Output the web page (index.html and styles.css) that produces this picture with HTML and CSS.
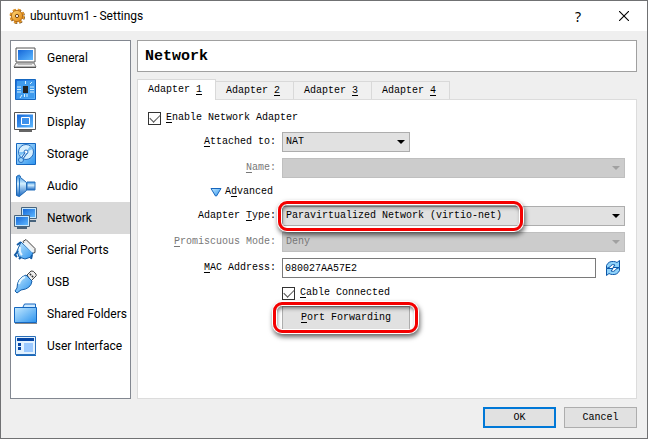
FILE: index.html
```html
<!DOCTYPE html>
<html lang="en">
<head>
<meta charset="utf-8">
<title>ubuntuvm1 - Settings</title>
<link rel="stylesheet" href="styles.css">
</head>
<body>
<svg class="defs" aria-hidden="true">
  <defs>
    <linearGradient id="blue" x1="0" y1="0" x2="1" y2="1"><stop offset="0" stop-color="#1567d8"/><stop offset="1" stop-color="#5db8ff"/></linearGradient>
    <linearGradient id="light" x1="0" y1="0" x2="1" y2="1"><stop offset="0" stop-color="#c4e9ff"/><stop offset="1" stop-color="#2b93ee"/></linearGradient>
    <linearGradient id="cone" x1="0" y1="0" x2="0" y2="1"><stop offset="0" stop-color="#2a86dc"/><stop offset=".4" stop-color="#d4f0ff"/><stop offset="1" stop-color="#1463c0"/></linearGradient>
    <linearGradient id="gold" x1="0" y1="0" x2="1" y2="1"><stop offset="0" stop-color="#ffd878"/><stop offset="1" stop-color="#e0830c"/></linearGradient>
  </defs>
</svg>
<div class="window">
  <header class="titlebar">
    <svg class="app-icon" viewBox="0 0 16 16" aria-hidden="true">
      <circle cx="8.500" cy="8.500" r="6" fill="none" stroke="#6a4a24" stroke-width="3" stroke-dasharray="2.700 2.012"/>
      <circle cx="8" cy="8" r="6" fill="none" stroke="#e69a2c" stroke-width="3" stroke-dasharray="2.700 2.012"/>
      <circle cx="8" cy="8" r="5.600" fill="url(#gold)" stroke="#a86010" stroke-width=".8"/>
      <circle cx="8" cy="8" r="1.600" fill="#fff" stroke="#70410c"/>
    </svg>
    <h1 class="title">ubuntuvm1 - Settings</h1>
    <button class="caption help" aria-label="Help">?</button>
    <button class="caption" aria-label="Close"><svg viewBox="0 0 10 10" width="10" height="10"><path d="M0 0L10 10M10 0L0 10" stroke="#000" stroke-width="1.100"/></svg></button>
  </header>
  <div class="body">
    <nav class="sidebar">
      <a href="#general"><svg viewBox="0 0 24 24"><path d="M3 2h19v14H3z" fill="#fff" stroke="#555"/><path d="M5 4h15v10H5z" fill="url(#blue)"/><path d="M3 17h18l2 4H1z" fill="#eee" stroke="#777"/><path d="M1 21.500h22" stroke="#555"/><path d="M5 18.500h14" stroke="#bbb"/></svg>General</a>
      <a href="#system"><svg viewBox="0 0 24 24"><path d="M2.500 1.500h20v20h-20z" fill="url(#blue)" stroke="#1567c0"/><path d="M4 3h17v17H4z" fill="#3f9bed"/><path d="M10 8h5v7h-5z" fill="#222"/><path d="M4 9h4M4 11.500h4M4 14h4M17 9h4M17 11.500h4M17 14h4M12.500 3v3M17 6l2-2M7 20l2-3M11.500 16v3M14 16v3" stroke="#d4efff"/></svg>System</a>
      <a href="#display"><svg viewBox="0 0 24 24"><path d="M1.500 2.500h21v17h-21z" fill="#fff" stroke="#555"/><path d="M4 4.500h16v13H4z" fill="url(#blue)"/><path d="M8.500 7.500h8v7h-8z" fill="#3d91ec" stroke="#fff"/><path d="M6 21h13" stroke="#666" stroke-width="2"/></svg>Display</a>
      <a href="#storage"><svg viewBox="0 0 24 24"><path d="M3.500 1.500h19v21h-19z" fill="url(#light)" stroke="#1567c0"/><circle cx="13" cy="10" r="7.500" fill="#d6efff" stroke="#286fc0"/><path d="M13 10l4-6 3 3zM13 10l-6 4-1-4z" fill="#7cc1f5"/><circle cx="13" cy="10" r="2" fill="#fff" stroke="#286fc0"/><path d="M13 11l-5 7" stroke="#286fc0" stroke-width="3"/><path d="M13 11l-5 7" stroke="#eef8ff"/><circle cx="8" cy="18" r="2.500" fill="#9cd4fb" stroke="#286fc0"/></svg>Storage</a>
      <a href="#audio"><svg viewBox="0 0 24 24"><path d="M3.500 2.500q4-3 4 1l6 5v8l-6 5q0 2-4 0z" fill="url(#cone)" stroke="#1d67b4"/><path d="M14 8h8v8h-8z" fill="url(#cone)" stroke="#2a73bd"/><path d="M6.500 4v17" stroke="#2375c5"/></svg>Audio</a>
      <a class="current" href="#network" aria-current="page"><svg viewBox="0 0 24 24"><path d="M8.500 1.500h15v11h-15z" fill="#c9e9fd" stroke="#47637c"/><path d="M10 3h12v8H10z" fill="url(#blue)"/><path d="M15 15h8" stroke="#47637c" stroke-width="2"/><path d="M1.500 9.500h15v11h-15z" fill="#c9e9fd" stroke="#47637c"/><path d="M3 11h12v8H3z" fill="url(#blue)"/><path d="M4 22h10" stroke="#47637c" stroke-width="2"/></svg>Network</a>
      <a href="#serial"><svg viewBox="0 0 24 24"><path d="M10 3.500l3-2 9 9v4l-3 1z" fill="#eee" stroke="#444"/><path d="M8 4l12 11-2 4-6 2-6-2-2-6z" fill="url(#light)" stroke="#145da8"/><path d="M5 13l-3 4 2 2M8 19l-2 2M8 4L4 7M19 17l-1 4" fill="none" stroke="#145da8" stroke-width="2"/><path d="M11 5l9 9" stroke="#e8f6ff" stroke-width="2"/><path d="M7 9q-1 5 2 8" fill="none" stroke="#e8f6ff" stroke-width="2"/></svg>Serial Ports</a>
      <a href="#usb"><svg viewBox="0 0 24 24"><path d="M14 5l4-4q2-1 5 3 1 2-1 3l-4 4z" fill="#eee" stroke="#444"/><path d="M17 5l1-1M19 7l1-1" stroke="#333" stroke-width="2"/><path d="M13 5l6 6q-1 8-11 9l-4 3-2-2 2-3Q4 8 13 5z" fill="url(#light)" stroke="#145da8"/><path d="M6 14q1-5 6-7" fill="none" stroke="#e2f6ff" stroke-width="2"/></svg>USB</a>
      <a href="#folders"><svg viewBox="0 0 24 24"><path d="M9.500 6l2-4h11v4" fill="#cce9ff" stroke="#1567c0"/><path d="M1.500 5.500h22v15h-22z" fill="url(#light)" stroke="#1567c0"/><path d="M2 21.500h22" stroke="#888"/></svg>Shared Folders</a>
      <a href="#interface"><svg viewBox="0 0 24 24"><path d="M2.500 2.500h20v18h-20z" fill="#e3f2ff" stroke="#2a6eb8"/><path d="M4 4h17v3H4z" fill="#0646a5"/><path d="M5 9h3v3H5zM5 13h3v3H5z" fill="#0646a5"/><path d="M11 9h9v9h-9z" fill="#9bc9ff"/><path d="M3 21.500h20" stroke="#1769bd"/></svg>User Interface</a>
    </nav>
    <main class="content">
      <h2 class="heading">Network</h2>
      <div class="tabs" role="tablist">
        <button class="tab active" role="tab" aria-selected="true">Adapter <u>1</u></button>
        <button class="tab" role="tab">Adapter <u>2</u></button>
        <button class="tab" role="tab">Adapter <u>3</u></button>
        <button class="tab" role="tab">Adapter <u>4</u></button>
      </div>
      <form class="pane">
        <label class="check"><input type="checkbox" checked><span><u>E</u>nable Network Adapter</span></label>
        <div class="grid">
          <label class="name" for="attached"><u>A</u>ttached to:</label>
          <div class="combo short"><select id="attached"><option>NAT</option></select></div>
          <label class="name off" for="name"><u>N</u>ame:</label>
          <div class="combo off"><select id="name" disabled><option></option></select></div>
          <button type="button" class="advanced"><svg viewBox="0 0 12 10" width="12" height="10"><path d="M1 1.500h10L6.500 9h-1z" fill="url(#light)" stroke="#1766bd" stroke-linejoin="round"/></svg><span>A<u>d</u>vanced</span></button>
          <label class="name" for="type">Adapter <u>T</u>ype:</label>
          <div class="combo marked"><select id="type"><option>Paravirtualized Network (virtio-net)</option></select><span class="ring"></span></div>
          <label class="name off" for="mode"><u>P</u>romiscuous Mode:</label>
          <div class="combo off"><select id="mode" disabled><option>Deny</option></select></div>
          <label class="name" for="mac"><u>M</u>AC Address:</label>
          <div class="mac"><input id="mac" type="text" value="080027AA57E2"><button type="button" class="refresh" aria-label="Generate new address"><svg viewBox="0 0 16 16" width="16" height="16"><path d="M1.500 8.500v-3q2-4.500 7-4 2 0 3.500 1L14.500.5v7H8l2-2.500q-3-1-4 .5T5 7z" fill="#8fd2fa" stroke="#0b56a8"/><path d="M14.500 7.500v3q-2 4.500-7 4-2 0-3.500-1l-2.500 2v-7H8L6 11q3 1 4-.5T11 9z" fill="#8fd2fa" stroke="#0b56a8"/></svg></button></div>
          <label class="check cable"><input type="checkbox" checked><span><u>C</u>able Connected</span></label>
          <div class="forward marked"><button type="button"><u>P</u>ort Forwarding</button><span class="ring"></span></div>
        </div>
      </form>
    </main>
  </div>
  <footer class="actions">
    <button class="primary">OK</button>
    <button>Cancel</button>
  </footer>
</div>
</body>
</html>
```
FILE: styles.css
```css
* { box-sizing: border-box; }
body {
  margin: 0;
  color: #000;
  font: 10px/16px "Liberation Mono", monospace;
}
button, input, select { font: inherit; color: inherit; margin: 0; }
u { text-underline-offset: 2px; }
.defs { position: absolute; width: 0; height: 0; }

.window {
  display: flex;
  flex-direction: column;
  min-height: 100vh;
  border: 1px solid #707173;
  background: #efefef;
}
.titlebar {
  display: flex;
  align-items: center;
  height: 30px;
  padding-left: 8px;
  background: #fff;
}
.app-icon { width: 16px; height: 16px; }
.title {
  flex: 1;
  margin: 0 0 0 5px;
  font: 12px/16px Roboto, sans-serif;
}
.caption {
  display: flex;
  align-items: center;
  justify-content: center;
  width: 46px;
  height: 30px;
  padding: 0;
  border: 0;
  background: none;
}
.help { font: 14px "Noto Sans", sans-serif; }

.body {
  flex: 1;
  display: flex;
  gap: 6px;
  padding: 9px 10px 0 9px;
}
.sidebar {
  width: 121px;
  flex: none;
  padding-top: 1px;
  border: 1px solid #828790;
  background: #fff;
}
.sidebar a {
  display: flex;
  align-items: center;
  gap: 10px;
  height: 32px;
  padding-left: 2px;
  color: #000;
  font: 12px/16px Roboto, sans-serif;
  white-space: nowrap;
  text-decoration: none;
}
.sidebar svg { width: 24px; height: 24px; flex: none; }
.sidebar .current { background: #d9d9d9; }

.content { flex: 1; min-width: 0; display: flex; flex-direction: column; }
.heading {
  height: 32px;
  margin: 0 0 7px;
  padding-left: 7px;
  border: 1px solid #a0a0a0;
  background: #fff;
  font-size: 15px;
  line-height: 32px;
}
.tabs { display: flex; align-items: flex-end; height: 20px; }
.tab {
  width: 78px;
  height: 18px;
  padding: 0 3px 0 0;
  border: 1px solid #d9d9d9;
  border-width: 1px 1px 0 0;
  background: #f0f0f0;
}
.active {
  position: relative;
  width: 79px;
  height: 21px;
  margin-bottom: -1px;
  border-left-width: 1px;
  background: #fff;
}
.pane {
  flex: 1;
  padding: 11px 11px 0 10px;
  border: 1px solid #dcdcdc;
  background: #fff;
}
.check { display: flex; align-items: center; gap: 5px; height: 14px; }
.check input {
  display: grid;
  place-items: center;
  width: 13px;
  height: 13px;
  appearance: none;
  border: 1px solid #333;
  background: #fff;
}
.check input:checked::after {
  content: "";
  width: 9px;
  height: 5px;
  border: solid #555;
  border-width: 0 0 1px 1px;
  transform: translateY(-1px) rotate(-45deg);
}
.grid {
  display: grid;
  grid-template-columns: 128px 1fr;
  align-items: center;
  gap: 6px;
  margin-top: 7px;
}
.name { grid-column: 1; text-align: right; }
.off { color: #787878; }
.combo { position: relative; height: 20px; }
.short { width: 128px; }
.combo select {
  width: 100%;
  height: 20px;
  padding: 0 3px;
  appearance: none;
  border: 1px solid #adadad;
  border-radius: 0;
  background: #e1e1e1;
}
.combo::after {
  content: "";
  position: absolute;
  top: 8px;
  right: 5px;
  border: 4px solid transparent;
  border-top-color: #000;
  border-bottom: 0;
  pointer-events: none;
}
.combo select:disabled { border-color: #bfbfbf; background: #ccc; opacity: 1; }
.combo.off::after { border-top-color: #a0a0a0; }
.advanced {
  grid-column: 1;
  justify-self: end;
  display: flex;
  align-items: center;
  gap: 3px;
  height: 16px;
  padding: 0 3px 0 0;
  border: 0;
  background: none;
}
.mac { display: flex; align-items: center; gap: 9px; padding-right: 4px; }
.mac input {
  flex: 1;
  min-width: 0;
  height: 20px;
  padding: 0 2px;
  border: 1px solid #7a7a7a;
}
.refresh { width: 16px; height: 16px; padding: 0; border: 0; background: none; }
.refresh svg { display: block; }
.cable, .forward { grid-column: 2; }
.cable { margin-top: 2px; }
.forward { position: relative; width: 128px; }
.forward button {
  display: block;
  width: 100%;
  height: 24px;
  padding: 0;
  border: 1px solid #adadad;
  background: #e1e1e1;
}

/* Highlight frames drawn over the controls they point out */
.marked { z-index: 1; }
.ring {
  position: absolute;
  z-index: 2;
  inset: -4px -8px -3px -9px;
  border: 3px solid #f40000;
  border-radius: 9px;
  box-shadow: 0 0 0 1px #fff, 1px 3px 5px 1px #0009, inset 0 0 0 1px #fff, inset 1px 3px 4px #0008;
  pointer-events: none;
}
.combo .ring { inset: -5px auto -5px -4px; width: 245px; }

.actions {
  display: flex;
  justify-content: flex-end;
  gap: 8px;
  padding: 8px 10px 10px;
}
.actions button {
  width: 73px;
  height: 21px;
  padding: 0;
  border: 1px solid #adadad;
  background: #e1e1e1;
}
.actions .primary { border: 2px solid #0078d7; }
```
